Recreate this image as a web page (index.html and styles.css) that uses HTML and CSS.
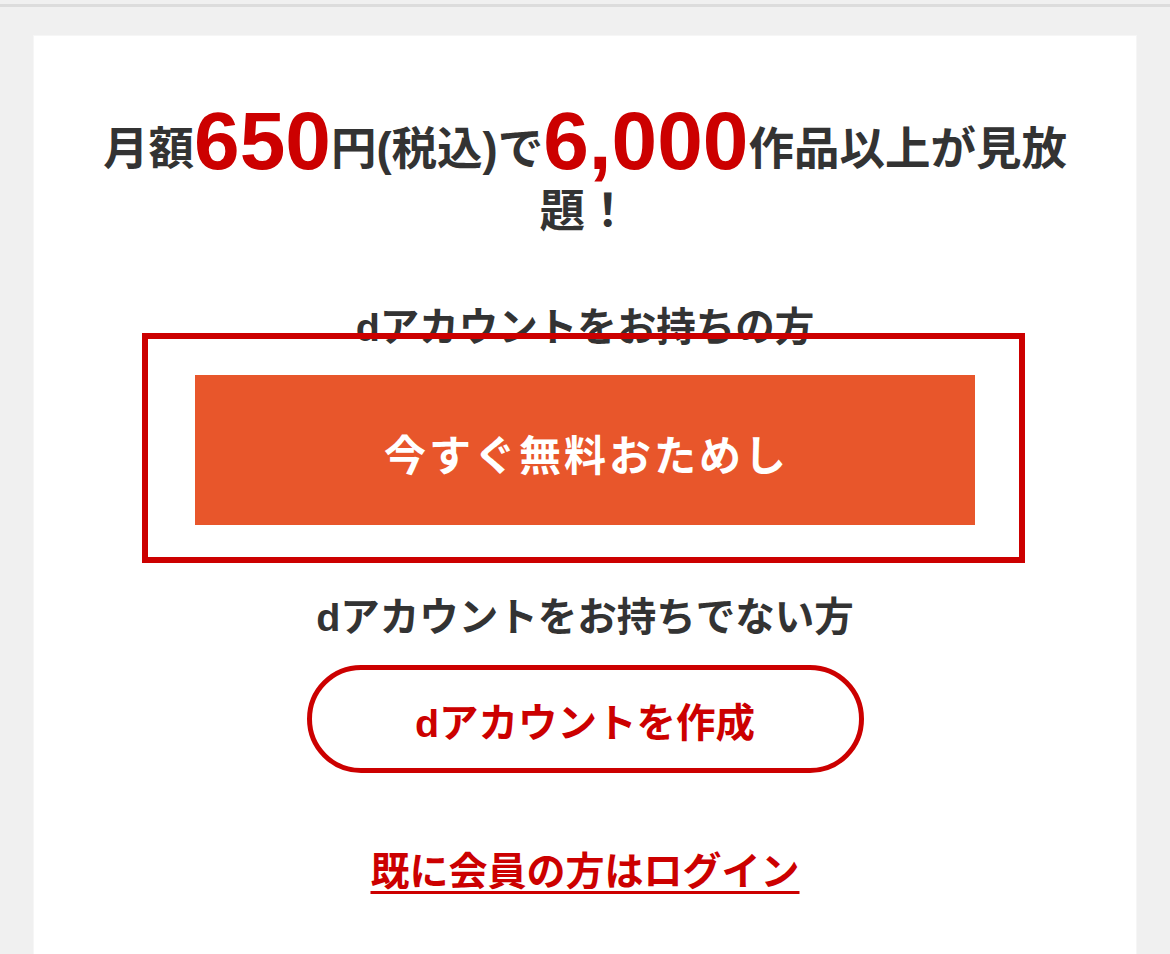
FILE: index.html
```html
<!DOCTYPE html>
<html lang="ja">
<head>
<meta charset="utf-8">
<link rel="stylesheet" href="styles.css">
</head>
<body>
<div class="topline"></div>
<main class="card">
  <h1 class="title">月額<span class="num">650</span>円(税込)で<span class="num">6,000</span>作品以上が見放題！</h1>
  <p class="label label-first">dアカウントをお持ちの方</p>
  <div class="highlight">
    <a class="btn-trial" href="#">今すぐ無料おためし</a>
  </div>
  <p class="label label-second">dアカウントをお持ちでない方</p>
  <a class="btn-create" href="#">dアカウントを作成</a>
  <a class="login" href="#">既に会員の方はログイン</a>
</main>
</body>
</html>
```

FILE: styles.css
```css
html, body {
  margin: 0;
  padding: 0;
}
body {
  background: #f0f0f0;
  font-family: "Liberation Sans", "Noto Sans CJK JP", sans-serif;
  font-weight: bold;
  color: #333;
  height: 954px;
  overflow: hidden;
}
.topline {
  margin-top: 4px;
  height: 3px;
  background: #dcdcdc;
}
.card {
  margin: 29px 0 0 34px;
  width: 1102px;
  height: 918px;
  background: #fff;
  box-shadow: 0 0 0 1px #f6f6f6;
  box-sizing: border-box;
  padding: 83px 50px 0;
  display: flex;
  flex-direction: column;
  align-items: center;
}
.title {
  margin: 0;
  font-size: 45.5px;
  line-height: 62px;
  font-weight: bold;
  text-align: center;
  color: #333;
}
.num {
  font-size: 82px;
  line-height: 0;
  color: #cc0000;
  position: relative;
  top: 4px;
}
.label {
  margin: 0;
  font-size: 39.5px;
  line-height: 56px;
  color: #333;
}
.label-first {
  margin-top: 56px;
}
.highlight {
  position: relative;
  margin-top: 20px;
}
.highlight::after {
  content: "";
  position: absolute;
  left: -53px;
  top: -42px;
  right: -50px;
  bottom: -38px;
  border: 6px solid #cc0000;
  pointer-events: none;
}
.btn-trial {
  display: flex;
  align-items: center;
  justify-content: center;
  width: 780px;
  height: 150px;
  padding: 4px 0 0 3px;
  box-sizing: border-box;
  background: #e8562b;
  color: #fff;
  font-size: 42px;
  letter-spacing: 3px;
  text-decoration: none;
}
.label-second {
  margin-top: 64px;
}
.btn-create {
  margin-top: 20px;
  display: flex;
  align-items: center;
  justify-content: center;
  width: 557px;
  height: 108px;
  box-sizing: border-box;
  border: 5px solid #cc0000;
  border-radius: 54px;
  color: #cc0000;
  font-size: 39.5px;
  text-decoration: none;
}
.login {
  margin-top: 71px;
  font-size: 39px;
  line-height: 56px;
  color: #cc0000;
  text-decoration: underline;
  text-decoration-thickness: 3px;
  text-underline-offset: 6px;
}
```
